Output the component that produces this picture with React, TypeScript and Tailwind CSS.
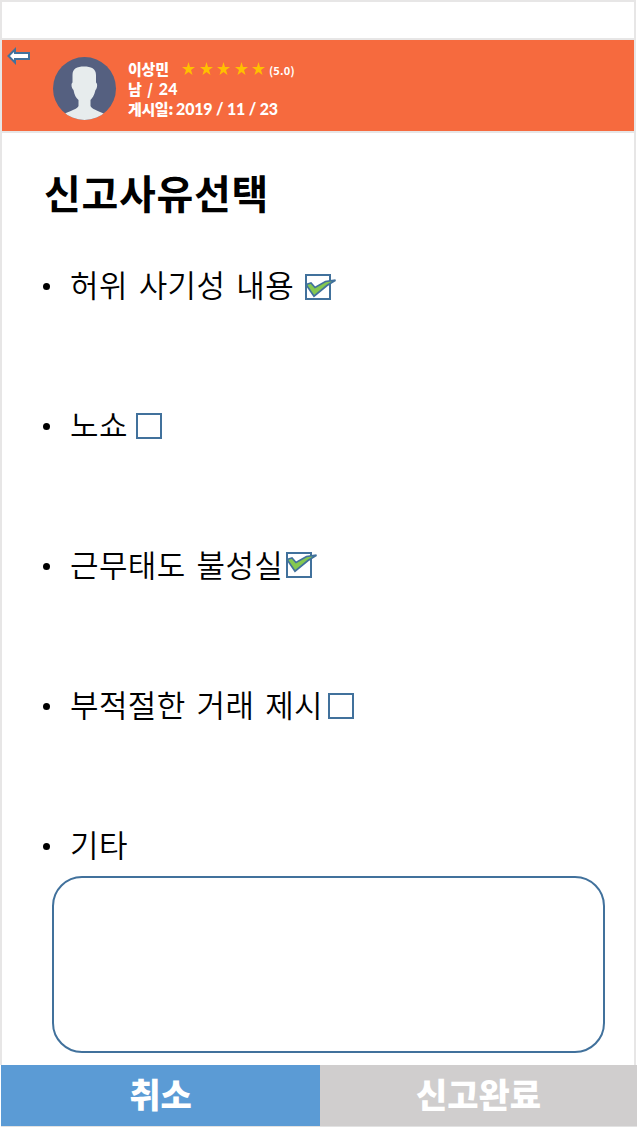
import React from "react";

type Reason = {
  label: string;
  checked?: boolean;
  width: string;
  boxTop?: string;
  tickTop?: string;
};

const reasons: Reason[] = [
  { label: "허위 사기성 내용", checked: true, width: "w-[235px]", boxTop: "mt-[8px]", tickTop: "top-[2px]" },
  { label: "노쇼", checked: false, width: "w-[66px]", boxTop: "mt-[7px]" },
  { label: "근무태도 불성실", checked: true, width: "w-[216px]", boxTop: "mt-[6px]", tickTop: "top-[-1px]" },
  { label: "부적절한 거래 제시", checked: false, width: "w-[258px]", boxTop: "mt-[7px]" },
  { label: "기타", width: "w-[66px]" },
];

function BackArrow() {
  return (
    <svg width="24" height="18" viewBox="0 0 24 18" className="block">
      <path d="M1.500 9 8 2.500V6h14v6H8v3.500Z" fill="#fff" stroke="#41719c" strokeWidth="2" />
    </svg>
  );
}

function Avatar() {
  return (
    <svg width="64" height="64" viewBox="0 0 64 64" className="block">
      <defs>
        <clipPath id="avatar">
          <circle cx="31.500" cy="32.500" r="31.500" />
        </clipPath>
      </defs>
      <circle cx="31.500" cy="32.500" r="31.500" fill="#556080" />
      <path
        clipPath="url(#avatar)"
        d="M19.500 19C19.500 12.500 24 10.500 31 10.500S43 12.500 43 19v7.500c1.800 1 1.300 6-.5 7.500-1.200 5-3 8-5 10v6c1 3 7 4.500 14 8V66H11v-8c7-3.500 13.500-5 14.500-8v-6c-2.500-2-4-5-5-10-2-1.500-2.800-6.500-1-7.500Z"
        fill="#e7eced"
      />
    </svg>
  );
}

function Star() {
  return (
    <svg width="13" height="13" viewBox="0 0 13 13" className="block">
      <path d="M6.500 0 8 4.900h5L9 8l1.500 5-4-3.100-4 3.100L4 8 0 4.900h5Z" fill="#ffc000" />
    </svg>
  );
}

function Checkbox({ checked, tickTop = "top-0" }: { checked: boolean; tickTop?: string }) {
  return (
    <span className="relative block h-[26px] w-[25.5px] shrink-0 border-2 border-[#41719c] bg-white">
      {checked && (
        <svg
          width="36"
          height="22"
          viewBox="0 0 36 22"
          className={`absolute -left-[2px] ${tickTop} max-w-none`}
        >
          <path
            d="M1 6.500 6 5 10 9.500 20.500 3.500 30.500 2.200 22 7.500 9 18.200Z"
            fill="#85c850"
            stroke="#41719c"
            strokeWidth="1.700"
          />
        </svg>
      )}
    </span>
  );
}

export default function App() {
  return (
    <div className="h-[1141px] w-[637px] bg-white font-['Noto_Sans_CJK_KR',sans-serif]">
      <div className="flex h-[1127px] w-[637px] flex-col">
        <div className="mr-px flex h-[1065px] flex-col border-x-2 border-t-2 border-[#e7e6e6]">
          <div className="h-9" />
          <header className="box-content flex h-[91px] border-y-2 border-[#e7e6e6] bg-[#f66a3e] bg-clip-padding">
            <button className="mt-[7px] ml-[5px] h-[18px] w-6" aria-label="뒤로">
              <BackArrow />
            </button>
            <div className="mt-4 ml-[22px]">
              <Avatar />
            </div>
            <div className="mt-[19px] ml-[11px] text-[15px] leading-5 font-black text-white">
              <div className="flex h-5 items-center">
                <span className="w-[54px] tracking-[-0.2px]">이상민</span>
                <span className="-mt-[2px] flex gap-[4.500px]">
                  <Star /><Star /><Star /><Star /><Star />
                </span>
                <span className="mt-px ml-[4px] text-[11px] font-bold tracking-[0.2px]">(5.0)</span>
              </div>
              <div className="h-5 [word-spacing:1.5px] tracking-[0.3px]">
                남 / <span className="font-['Lato','Noto_Sans_CJK_KR',sans-serif] text-[16px]">24</span>
              </div>
              <div className="h-5 whitespace-nowrap">
                <span className="tracking-[-0.4px]">게시일: </span>
                <span className="font-['Lato','Noto_Sans_CJK_KR',sans-serif] text-[16px] tracking-[-0.2px] [word-spacing:0px]">
                  2019 / 11 / 23
                </span>
              </div>
            </div>
          </header>
          <main className="flex flex-col">
            <h1 className="mt-[29px] ml-[42px] h-[60px] text-[40px] leading-[60px] font-bold tracking-[0.7px] text-black">
              신고사유선택
            </h1>
            <ul className="mt-[44px] ml-[40px] text-black">
              {reasons.map((r, i) => (
                <li key={r.label} className={i === 4 ? "flex h-[60px] items-start" : "flex h-[140px] items-start"}>
                  <span className="flex h-10 w-7 items-center">
                    <span className="ml-px h-[7px] w-[7px] rounded-full bg-black" />
                  </span>
                  <span
                    className={`${r.width} -mt-[2px] shrink-0 text-[31px] leading-10 font-[350] tracking-[0.4px] whitespace-nowrap [word-spacing:3.500px]`}
                  >
                    {r.label}
                  </span>
                  {r.checked !== undefined && (
                    <span className={r.boxTop}>
                      <Checkbox checked={r.checked} tickTop={r.tickTop} />
                    </span>
                  )}
                </li>
              ))}
            </ul>
            <textarea
              aria-label="기타"
              className="-mt-[10px] ml-[50px] block h-[177px] w-[553px] resize-none rounded-[30px] border-2 border-[#41719c] bg-white p-5 text-xl outline-none"
            />
          </main>
        </div>
        <footer className="ml-px flex h-[62px] border-b border-[#e2e2e2] text-[34px] leading-[57px] font-black text-white">
          <button className="w-[319px] bg-[#5b9bd5] pb-1">취소</button>
          <button className="flex-1 bg-[#d0cece] pb-1">신고완료</button>
        </footer>
      </div>
    </div>
  );
}
